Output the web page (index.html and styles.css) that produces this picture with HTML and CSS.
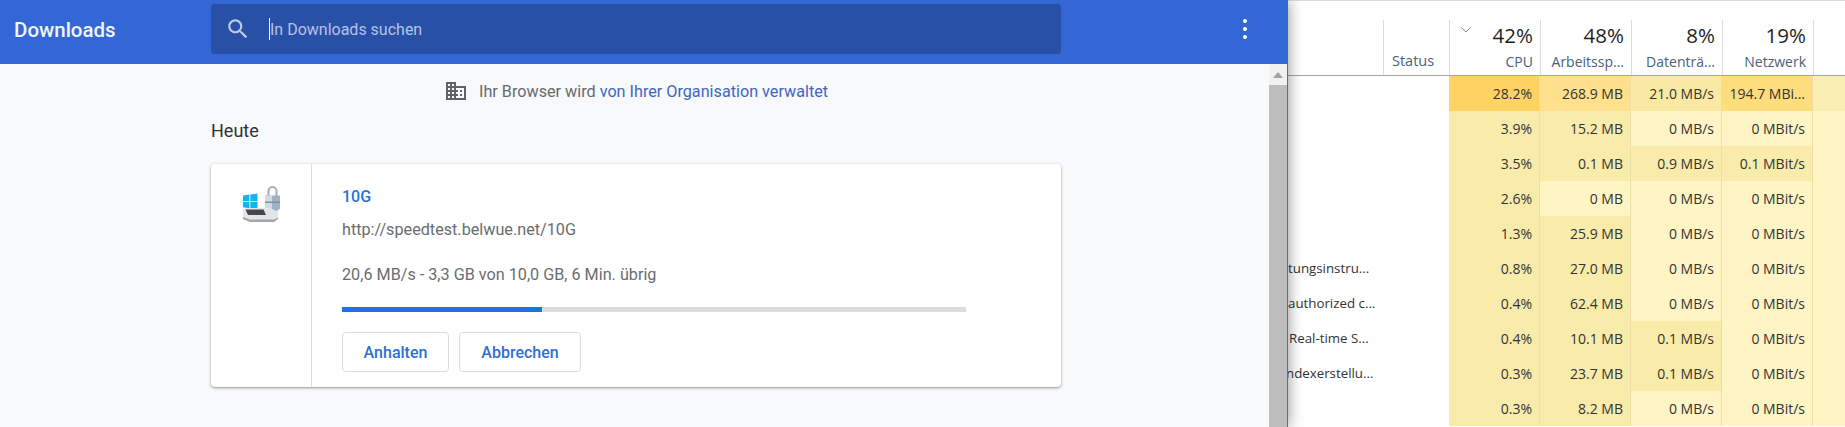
FILE: index.html
```html
<!DOCTYPE html>
<html lang="de">
<head>
<meta charset="utf-8">
<title>Downloads</title>
<link rel="stylesheet" href="styles.css">
</head>
<body>
<section class="chrome">
  <header class="topbar">
    <h1 class="title">Downloads</h1>
    <div class="search">
      <svg class="search-icon" viewBox="0 0 24 24"><path d="M15.5 14h-.79l-.28-.27C15.41 12.59 16 11.11 16 9.5 16 5.91 13.09 3 9.5 3S3 5.91 3 9.5 5.91 16 9.5 16c1.61 0 3.09-.59 4.23-1.57l.27.28v.79l5 4.99L20.49 19l-4.99-5zm-6 0C7.01 14 5 11.99 5 9.5S7.01 5 9.5 5 14 7.01 14 9.5 11.99 14 9.5 14z"/></svg>
      <span class="caret"></span>
      <span class="placeholder">In Downloads suchen</span>
    </div>
    <div class="more"><i></i><i></i><i></i></div>
  </header>
  <div class="content">
    <main class="main">
      <div class="managed">
        <svg class="building" viewBox="0 0 24 24"><path d="M12 7V3H2v18h20V7H12zM6 19H4v-2h2v2zm0-4H4v-2h2v2zm0-4H4V9h2v2zm0-4H4V5h2v2zm4 12H8v-2h2v2zm0-4H8v-2h2v2zm0-4H8V9h2v2zm0-4H8V5h2v2zm10 12h-8v-2h2v-2h-2v-2h2v-2h-2V9h8v10zm-2-8h-2v2h2v-2zm0 4h-2v2h2v-2z"/></svg>
        <span>Ihr Browser wird <a class="link" href="#">von Ihrer Organisation verwaltet</a></span>
      </div>
      <h2 class="day">Heute</h2>
      <article class="card">
        <div class="icon-col">
          <svg class="file-icon" viewBox="0 0 38 38">
            <path d="M0 10.500l6.400-.9v6.400H0zM7.300 9.500L14.500 8.500V16H7.300zM0 16.800h6.400v6.400L0 22.300zM7.300 16.800h7.200v7.500l-7.200-1z" fill="#13b4ea"/>
            <path d="M25.500 11V6a4 4 0 0 1 8 0v5" fill="none" stroke="#a9b2ba" stroke-width="2.200"/>
            <path d="M22 10.500h15v13l-3 2.500H25l-3-2.500z" fill="#9fb2c4"/>
            <path d="M22 10.500h7V26h-4l-3-2.500z" fill="#d3dbe2"/>
            <path d="M22 16.500h15v1.500H22z" fill="#7f93a6"/>
            <path d="M1 24.500l3-1.500 22-.200 9 3.700v7l-4 3.500H7l-7-3v-9z" fill="#e3e5e6"/>
            <path d="M2.500 24.500h18l2.500 5.500H5z" fill="#44484b"/>
            <path d="M0 32l7 2.500h24l4-2v1.500l-4 3H7l-7-3z" fill="#a3a6a8"/>
          </svg>
        </div>
        <div class="details">
          <a class="file-name" href="#">10G</a>
          <div class="url">http://speedtest.belwue.net/10G</div>
          <div class="status">20,6 MB/s - 3,3 GB von 10,0 GB, 6 Min. übrig</div>
          <div class="progress"><div class="progress-fill" style="width:200px"></div></div>
          <div class="actions">
            <button class="btn btn-pause">Anhalten</button>
            <button class="btn btn-cancel">Abbrechen</button>
          </div>
        </div>
      </article>
    </main>
    <div class="scrollbar">
      <div class="scroll-arrow"><span class="tri"></span></div>
      <div class="scroll-thumb"></div>
    </div>
  </div>
</section>
<section class="taskmgr">
  <div class="row head">
    <div class="hc hc-name"></div>
    <div class="hc hc-status"><span class="hl">Status</span></div>
    <div class="hc"><svg class="chev" viewBox="0 0 10 6"><path d="M.5.500L5 5 9.500.500" fill="none" stroke="#7a8794" stroke-width="1"/></svg><span class="pct">42%</span><span class="hl">CPU</span></div>
    <div class="hc"><span class="pct">48%</span><span class="hl">Arbeitssp...</span></div>
    <div class="hc"><span class="pct">8%</span><span class="hl">Datenträ...</span></div>
    <div class="hc"><span class="pct">19%</span><span class="hl">Netzwerk</span></div>
    <div class="hc hc-end"></div>
  </div>
  <div class="row"><div class="name"></div><div class="c h4">28.2%</div><div class="c h3">268.9 MB</div><div class="c h2">21.0 MB/s</div><div class="c h3b">194.7 MBi...</div><div class="c end h1b"></div></div>
  <div class="row"><div class="name"></div><div class="c h1">3.9%</div><div class="c h1">15.2 MB</div><div class="c h0">0 MB/s</div><div class="c h0">0 MBit/s</div><div class="c end h0"></div></div>
  <div class="row"><div class="name"></div><div class="c h1">3.5%</div><div class="c h1">0.1 MB</div><div class="c h1">0.9 MB/s</div><div class="c h1">0.1 MBit/s</div><div class="c end h0"></div></div>
  <div class="row"><div class="name"></div><div class="c h1">2.6%</div><div class="c h0">0 MB</div><div class="c h0">0 MB/s</div><div class="c h0">0 MBit/s</div><div class="c end h0"></div></div>
  <div class="row"><div class="name"></div><div class="c h1">1.3%</div><div class="c h1">25.9 MB</div><div class="c h0">0 MB/s</div><div class="c h0">0 MBit/s</div><div class="c end h0"></div></div>
  <div class="row"><div class="name">tungsinstru...</div><div class="c h1">0.8%</div><div class="c h1">27.0 MB</div><div class="c h0">0 MB/s</div><div class="c h0">0 MBit/s</div><div class="c end h0"></div></div>
  <div class="row"><div class="name">authorized c...</div><div class="c h1">0.4%</div><div class="c h1">62.4 MB</div><div class="c h0">0 MB/s</div><div class="c h0">0 MBit/s</div><div class="c end h0"></div></div>
  <div class="row"><div class="name name-real">Real-time S...</div><div class="c h1">0.4%</div><div class="c h1">10.1 MB</div><div class="c h1">0.1 MB/s</div><div class="c h0">0 MBit/s</div><div class="c end h0"></div></div>
  <div class="row"><div class="name name-index">ndexerstellu...</div><div class="c h1">0.3%</div><div class="c h1">23.7 MB</div><div class="c h1">0.1 MB/s</div><div class="c h0">0 MBit/s</div><div class="c end h0"></div></div>
  <div class="row"><div class="name"></div><div class="c h1">0.3%</div><div class="c h1">8.2 MB</div><div class="c h0">0 MB/s</div><div class="c h0">0 MBit/s</div><div class="c end h0"></div></div>
</section>
</body>
</html>
```
FILE: styles.css
```css
* { box-sizing: border-box; }
html, body { margin: 0; height: 100%; overflow: hidden; }
body { display: flex; width: 1845px; height: 427px; background: #fff; }

.chrome {
  position: relative;
  z-index: 2;
  flex: 0 0 1288px;
  display: flex;
  flex-direction: column;
  font-family: Roboto, "Liberation Sans", sans-serif;
  border-right: 1px solid #2f7cbc;
  box-shadow: 0 0 14px rgba(0, 0, 0, .45);
}
.topbar {
  flex: 0 0 64px;
  display: flex;
  align-items: center;
  background: #3367d6;
  margin-right: -1px;
}
.title {
  flex: 0 0 211px;
  margin: -4px 0 0;
  padding-left: 14px;
  font-size: 20.500px;
  font-weight: 500;
  color: #f1f5fd;
}
.search {
  flex: 0 0 850px;
  height: 50px;
  display: flex;
  align-items: center;
  margin-top: -6px;
  padding-left: 14px;
  background: #2850a7;
  border-radius: 3px;
}
.search-icon { width: 26px; height: 26px; fill: #bcc9e8; flex: none; }
.caret { width: 1px; height: 22px; background: #f5f7fd; margin-left: 18px; flex: none; }
.placeholder { font-size: 16px; color: #b5c3e6; }
.more { margin-left: 182px; display: flex; flex-direction: column; gap: 4px; margin-top: -6px; }
.more i { display: block; width: 4px; height: 4px; border-radius: 50%; background: #fff; }

.content { flex: 1; display: flex; min-height: 0; }
.main { flex: 1; background: #f8f9fa; padding-left: 211px; padding-right: 208px; }
.managed {
  display: flex;
  align-items: center;
  height: 24px;
  margin-top: 15px;
  margin-left: 233px;
  white-space: nowrap;
  font-size: 16.200px;
  color: #666a6e;
}
.building { width: 24px; height: 24px; fill: #5f6368; margin-right: 11px; flex: none; }
.link { color: #3f65c5; text-decoration: none; }
.day {
  margin: 16px 0 0;
  height: 24px;
  line-height: 24px;
  font-size: 18px;
  font-weight: 400;
  color: #303134;
}
.card {
  display: flex;
  height: 223px;
  margin-top: 21px;
  background: #fff;
  border-radius: 4px;
  box-shadow: 0 1px 2px rgba(60, 64, 67, .4), 0 1px 3px 1px rgba(60, 64, 67, .12);
}
.icon-col {
  flex: 0 0 101px;
  border-right: 1px solid #dadce0;
  padding: 21px 0 0 32px;
}
.file-icon { display: block; width: 38px; height: 38px; }
.details { flex: 1; padding-left: 30px; padding-right: 95px; }
.file-name {
  display: block;
  margin-top: 24px;
  line-height: 18px;
  font-size: 16px;
  font-weight: 500;
  color: #2374dc;
  text-decoration: none;
}
.url, .status { font-size: 16.200px; line-height: 18px; color: #6a6d70; }
.url { margin-top: 15px; }
.status { margin-top: 27px; }
.progress { height: 5px; margin-top: 23px; background: #dcdcdc; }
.progress-fill { height: 5px; background: #1a73e8; }
.actions { display: flex; gap: 10px; margin-top: 20px; }
.btn {
  height: 40px;
  padding: 0;
  font-family: inherit;
  font-size: 16px;
  font-weight: 500;
  color: #2b70d8;
  background: #fff;
  border: 1px solid #dadce0;
  border-radius: 4px;
}
.btn-pause { width: 107px; }
.btn-cancel { width: 122px; }

.scrollbar { flex: 0 0 18px; display: flex; flex-direction: column; background: #f1f1f1; }
.scroll-arrow { flex: 0 0 21px; display: flex; align-items: center; justify-content: center; }
.tri { width: 0; height: 0; border-left: 5px solid transparent; border-right: 5px solid transparent; border-bottom: 6px solid #a3a3a3; }
.scroll-thumb { flex: 1; background: #bdbdbd; }

.taskmgr {
  flex: 1;
  min-width: 0;
  display: flex;
  flex-direction: column;
  overflow: hidden;
  border-top: 1px solid #dcdcdc;
  font-family: "Open Sans", "Liberation Sans", sans-serif;
  font-size: 14px;
  color: #333;
}
.row { display: grid; grid-template-columns: 161px 91px 91px 91px 91px 32px; height: 35px; }
.head {
  grid-template-columns: 96px 66px 91px 91px 91px 91px 31px;
  height: 56px;
  margin-top: 19px;
  position: relative;
}
.head::after { content: ""; position: absolute; left: 0; right: 0; bottom: 0; height: 1px; background: #a0a5aa; }
.hc {
  position: relative;
  display: flex;
  flex-direction: column;
  align-items: flex-end;
  padding-right: 7px;
  border-right: 1px solid #d9dde1;
}
.hc-end { border-right: 0; }
.hc-status { justify-content: flex-end; align-items: flex-start; padding: 0 0 6px 8px; }
.pct { font-size: 20.500px; line-height: 28px; color: #1f1f1f; margin-top: 1px; }
.hl { font-size: 14px; line-height: 18px; color: #4c607a; white-space: nowrap; margin-top: 4px; }
.hc-status .hl { margin-top: 0; font-size: 14.500px; }
.chev { position: absolute; left: 11px; top: 7px; width: 10px; height: 6px; }

.name { font-size: 13.300px; line-height: 35px; white-space: nowrap; overflow: hidden; }
.name-real { padding-left: 1px; }
.name-index { text-indent: -2px; }
.c {
  line-height: 35px;
  text-align: right;
  padding-right: 7px;
  white-space: nowrap;
  border-right: 1px solid #ecdfa8;
}
.end { border-right: 0; }
.h0 { background: #fff4c4; }
.h1 { background: #f9ecaa; }
.h1b { background: #fbeeb2; }
.h2 { background: #fae9a3; }
.h3 { background: #ffe08c; }
.h3b { background: #fedd7c; }
.h4 { background: #ffd264; }
```
